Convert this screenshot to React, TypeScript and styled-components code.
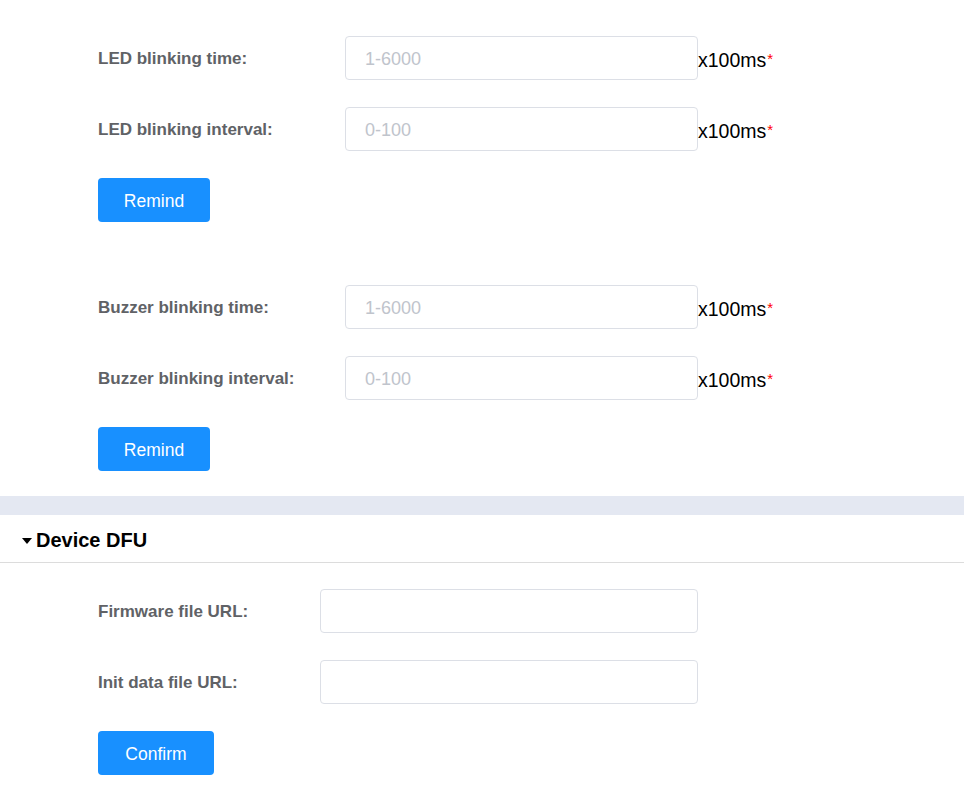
import React from "react";
import styled, { createGlobalStyle } from "styled-components";

const Global = createGlobalStyle`
  html, body { margin: 0; padding: 0; background: #fff; }
  body { font-family: "Liberation Sans", Arial, Helvetica, sans-serif; }
  * { box-sizing: border-box; }
`;

const Page = styled.div`
  width: 964px;
  display: flex;
  flex-direction: column;
`;

const Block = styled.div<{ $top: number; $bottom: number }>`
  padding: ${(p) => p.$top}px 0 ${(p) => p.$bottom}px 98px;
  display: flex;
  flex-direction: column;
  gap: 27px;
`;

const Row = styled.div`
  display: flex;
  align-items: center;
  height: 44px;
`;

const Label = styled.label<{ $w: number }>`
  width: ${(p) => p.$w}px;
  flex: none;
  font-size: 17px;
  font-weight: 700;
  color: #606266;
  padding-top: 2px;
`;

const Input = styled.input<{ $w: number }>`
  width: ${(p) => p.$w}px;
  height: 44px;
  flex: none;
  border: 1px solid #dcdfe6;
  border-radius: 4px;
  padding: 2px 19px 0;
  font-size: 18px;
  font-family: "Liberation Sans", Arial, sans-serif;
  color: #606266;
  outline: none;
  &::placeholder { color: #c0c4cc; }
`;

const Unit = styled.span`
  font-size: 19.5px;
  color: #000;
  margin-top: 4px;
`;

const Star = styled.sup`
  color: #f00;
  font-size: 15px;
  vertical-align: top;
  position: relative;
  top: 1px;
  margin-left: 1px;
`;

const Button = styled.button<{ $w: number }>`
  width: ${(p) => p.$w}px;
  height: 44px;
  border: none;
  border-radius: 4px;
  background: #1890ff;
  color: #fff;
  font-size: 17.5px;
  font-family: "Liberation Sans", Arial, sans-serif;
  cursor: pointer;
  padding: 3px 0 0;
`;

const Band = styled.div`
  height: 19px;
  background: #e4e8f2;
`;

const Header = styled.div`
  height: 48px;
  border-bottom: 1px solid #dcdcdc;
  display: flex;
  align-items: center;
  padding: 3px 0 0 22px;
  gap: 4px;
  font-size: 20px;
  font-weight: 700;
  color: #000;
`;

const Caret = styled.span`
  width: 0;
  height: 0;
  border-left: 5.5px solid transparent;
  border-right: 5.5px solid transparent;
  border-top: 6px solid #000;
  margin-top: 1px;
`;

function UnitField({ label, placeholder }: { label: string; placeholder: string }) {
  return (
    <Row>
      <Label $w={247}>{label}</Label>
      <Input $w={353} placeholder={placeholder} />
      <Unit>
        x100ms<Star>*</Star>
      </Unit>
    </Row>
  );
}

export default function App() {
  return (
    <Page>
      <Global />
      <Block $top={36} $bottom={0}>
        <UnitField label="LED blinking time:" placeholder="1-6000" />
        <UnitField label="LED blinking interval:" placeholder="0-100" />
        <div>
          <Button $w={112}>Remind</Button>
        </div>
      </Block>
      <Block $top={63} $bottom={25}>
        <UnitField label="Buzzer blinking time:" placeholder="1-6000" />
        <UnitField label="Buzzer blinking interval:" placeholder="0-100" />
        <div>
          <Button $w={112}>Remind</Button>
        </div>
      </Block>
      <Band />
      <Header>
        <Caret />
        Device DFU
      </Header>
      <Block $top={26} $bottom={19}>
        <Row>
          <Label $w={222}>Firmware file URL:</Label>
          <Input $w={378} />
        </Row>
        <Row>
          <Label $w={222}>Init data file URL:</Label>
          <Input $w={378} />
        </Row>
        <div>
          <Button $w={116}>Confirm</Button>
        </div>
      </Block>
    </Page>
  );
}
